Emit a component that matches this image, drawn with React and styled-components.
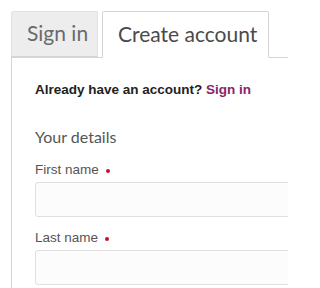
import React from 'react';
import styled, { createGlobalStyle } from 'styled-components';

const GlobalStyle = createGlobalStyle`
  html, body {
    margin: 0;
    padding: 0;
    background: #fff;
  }
  body {
    font-family: "Liberation Sans", Arial, sans-serif;
    overflow: hidden;
  }
`;

const Page = styled.div`
  width: 288px;
  height: 288px;
  padding: 11px 0 0 11px;
  box-sizing: border-box;
  overflow: hidden;
`;

const Tabs = styled.div`
  display: flex;
  align-items: flex-end;
  gap: 4px;
  position: relative;
  z-index: 1;
`;

const Tab = styled.div`
  box-sizing: border-box;
  width: ${p => p.$width}px;
  height: ${p => (p.$active ? 47 : 46)}px;
  margin-bottom: ${p => (p.$active ? -1 : 0)}px;
  padding: 0 0 3px ${p => p.$pad}px;
  display: flex;
  align-items: center;
  font-family: Lato, "Noto Sans", sans-serif;
  font-size: 21px;
  color: ${p => (p.$active ? '#4a4a4a' : '#6a6a6a')};
  background: ${p => (p.$active ? '#fff' : '#ededed')};
  border: 1px solid ${p => (p.$active ? '#d4d4d4' : '#e2e2e2')};
  border-bottom: ${p => (p.$active ? '1px solid #fff' : '1px solid #d4d4d4')};
  border-radius: 2px 2px 0 0;
`;

const Panel = styled.div`
  border-top: 1px solid #d4d4d4;
  border-left: 1px solid #d4d4d4;
  padding: 22px 0 0 23px;
  height: 240px;
`;

const Intro = styled.p`
  margin: 0;
  font-size: 13.5px;
  font-weight: 700;
  color: #222;
  line-height: 20px;
`;

const Link = styled.a`
  color: #8a2468;
  text-decoration: none;
`;

const Heading = styled.h2`
  margin: 26px 0 0;
  font-family: Lato, "Noto Sans", sans-serif;
  font-weight: 400;
  font-size: 16px;
  line-height: 22px;
  color: #555;
`;

const Field = styled.div`
  margin-top: ${p => p.$top}px;
  display: flex;
  flex-direction: column;
`;

const Label = styled.label`
  font-size: 13.5px;
  line-height: 18px;
  color: #555;
  display: flex;
  align-items: center;
`;

const Required = styled.span`
  width: 4px;
  height: 4px;
  border-radius: 50%;
  background: #c8102e;
  margin-left: 7px;
  margin-top: 1px;
`;

const Input = styled.input`
  margin-top: 3px;
  box-sizing: border-box;
  width: 280px;
  height: 35px;
  border: 1px solid #e0e0e0;
  border-radius: 3px;
  background: #fcfcfc;
  outline: none;
`;

export default function App() {
  return (
    <>
      <GlobalStyle />
      <Page>
        <Tabs>
          <Tab $width={87} $pad={15}>Sign in</Tab>
          <Tab $width={167} $pad={15} $active>Create account</Tab>
        </Tabs>
        <Panel>
          <Intro>
            Already have an account? <Link href="#">Sign in</Link>
          </Intro>
          <Heading>Your details</Heading>
          <Field $top={13}>
            <Label>First name<Required /></Label>
            <Input />
          </Field>
          <Field $top={12}>
            <Label>Last name<Required /></Label>
            <Input />
          </Field>
        </Panel>
      </Page>
    </>
  );
}
